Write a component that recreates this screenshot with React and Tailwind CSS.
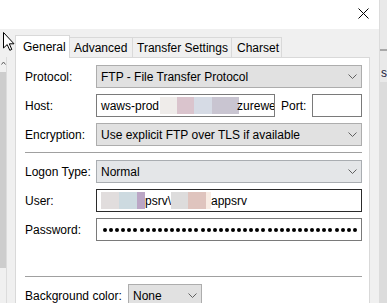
import React from "react";

const font = { fontFamily: '"Liberation Sans", Arial, sans-serif' };

function Chevron() {
     return (
          <svg width="9" height="6" viewBox="0 0 9 6" className="shrink-0">
               <polyline points="0.5,0.5 4.5,4.5 8.5,0.5" fill="none" stroke="#606060" strokeWidth="1" />
          </svg>
     );
}

function Select({ value, className = "" }) {
     return (
          <div className={`h-[23px] shrink-0 flex items-center justify-between border pl-[4px] pr-[4px] ${className}`}>
               <span className="whitespace-nowrap">{value}</span>
               <Chevron />
          </div>
     );
}

function Row({ label, children, className = "" }) {
     return (
          <div className={`flex shrink-0 items-center ${className}`}>
               <div className="w-[71px] shrink-0 whitespace-nowrap">{label}</div>
               <div className="flex-1 min-w-0">{children}</div>
          </div>
     );
}

function Blur({ w, color }) {
     return <span className="inline-block h-[17px] shrink-0" style={{ width: w, background: color }} />;
}

export default function App() {
     const dots = Array.from({ length: 42 });

     return (
          <div className="w-[387px] h-[303px] relative overflow-hidden bg-[#f0f0f0] flex text-[12px] text-black" style={font}>

               {/* dialog */}
               <div className="w-[379px] shrink-0 flex flex-col">

                    <div className="h-[29px] shrink-0 bg-white flex justify-end items-start pr-[10px] pt-[8px]">
                         <svg width="11" height="11" viewBox="0 0 11 11">
                              <line x1="0.5" y1="0.5" x2="10.5" y2="10.5" stroke="#000" strokeWidth="1" />
                              <line x1="10.5" y1="0.5" x2="0.5" y2="10.5" stroke="#000" strokeWidth="1" />
                         </svg>
                    </div>

                    <div className="flex-1 min-h-0 flex">

                         {/* tree scrollbar */}
                         <div className="w-[8px] shrink-0 pt-[28px] flex flex-col">
                              <div className="h-[15px] shrink-0 w-[7px] bg-[#f0f0f0] border-r border-[#dcdcdc] flex justify-center pt-[4px]">
                                   <svg width="5" height="4" viewBox="0 0 5 4">
                                        <polyline points="0.5,3.5 2.5,1 4.5,3.5" fill="none" stroke="#606060" strokeWidth="1" />
                                   </svg>
                              </div>
                              <div className="h-[196px] shrink-0 w-[7px] flex border-r border-[#dcdcdc]">
                                   <div className="w-[6px] bg-[#cdcdcd]" />
                              </div>
                              <div className="flex-1 w-[7px] border-r border-[#dcdcdc]" />
                         </div>

                         {/* tab control */}
                         <div className="ml-[7px] w-[355px] shrink-0 flex flex-col">

                              <div className="h-[28px] shrink-0 flex items-end">
                                   <div className="relative z-10 w-[55px] h-[23px] -mb-px bg-white border border-b-0 border-[#d9d9d9] flex items-center pl-[7px]">
                                        General
                                   </div>
                                   <div className="w-[63px] h-[20px] bg-[#f0f0f0] border border-l-0 border-b-0 border-[#d9d9d9] flex items-center pl-[4px]">
                                        Advanced
                                   </div>
                                   <div className="w-[99px] h-[20px] bg-[#f0f0f0] border border-l-0 border-b-0 border-[#d9d9d9] flex items-center pl-[4px]">
                                        Transfer Settings
                                   </div>
                                   <div className="w-[50px] h-[20px] bg-[#f0f0f0] border border-l-0 border-b-0 border-[#d9d9d9] flex items-center pl-[5px]">
                                        Charset
                                   </div>
                              </div>

                              <div className="flex-1 bg-white border border-[#d9d9d9] pl-[9px] pr-[7px] pt-[7px] flex flex-col">

                                   <Row label="Protocol:">
                                        <Select value="FTP - File Transfer Protocol" className="bg-[#e1e1e1] border-[#adadad]" />
                                   </Row>

                                   <Row label="Host:" className="mt-[6px]">
                                        <div className="flex items-center">
                                             <div className="w-[179px] h-[23px] border border-[#7a7a7a] flex items-center pl-[4px] overflow-hidden whitespace-nowrap">
                                                  <span>waws-prod</span>
                                                  <span className="ml-[1px] flex">
                                                       <Blur w={17} color="#efecea" />
                                                       <Blur w={17} color="#dac4cd" />
                                                       <Blur w={18} color="#d6dbe5" />
                                                       <Blur w={27} color="#c9c5d1" />
                                                  </span>
                                                  <span className="-ml-[2px]">zurewe</span>
                                             </div>
                                             <span className="ml-[6px]">Port:</span>
                                             <div className="ml-auto w-[50px] h-[23px] border border-[#7a7a7a]" />
                                        </div>
                                   </Row>

                                   <Row label="Encryption:" className="mt-[6px]">
                                        <Select value="Use explicit FTP over TLS if available" className="bg-[#e1e1e1] border-[#adadad]" />
                                   </Row>

                                   <div className="mt-[6px] h-px shrink-0 bg-[#a0a0a0]" />

                                   <Row label="Logon Type:" className="mt-[7px]">
                                        <Select value="Normal" className="bg-[#e4e6e8] border-[#a9adb1]" />
                                   </Row>

                                   <Row label="User:" className="mt-[6px]">
                                        <div className="h-[23px] border border-[#2b2b2b] flex items-center pl-[4px] whitespace-nowrap overflow-hidden">
                                             <Blur w={18} color="#e1dddd" />
                                             <Blur w={18} color="#cddae0" />
                                             <Blur w={8} color="#bba6c5" />
                                             <span>psrv\</span>
                                             <Blur w={17} color="#dddcdc" />
                                             <Blur w={18} color="#dfc4be" />
                                             <Blur w={5} color="#f8ece4" />
                                             <span>appsrv</span>
                                        </div>
                                   </Row>

                                   <Row label="Password:" className="mt-[6px]">
                                        <div className="h-[23px] border border-[#7a7a7a] flex items-center pl-[6px] gap-[2.1px] overflow-hidden">
                                             {dots.map((_, i) => (
                                                  <span key={i} className="w-[4px] h-[4px] shrink-0 rounded-full bg-black" />
                                             ))}
                                        </div>
                                   </Row>

                                   <div className="mt-[35px] h-px shrink-0 bg-[#a0a0a0]" />

                                   <div className="mt-[7px] shrink-0 flex items-center">
                                        <span className="w-[103px] shrink-0 whitespace-nowrap">Background color:</span>
                                        <Select value="None" className="w-[74px] bg-[#e1e1e1] border-[#adadad]" />
                                   </div>

                              </div>
                         </div>
                    </div>
               </div>

               {/* window behind */}
               <div className="w-[8px] shrink-0 flex flex-col bg-[#e9e9e9] border-l border-[#dcdcdc] overflow-hidden">
                    <div className="h-[49px] shrink-0" />
                    <div className="h-[2px] shrink-0 bg-[#a8a8a8]" />
                    <div className="pt-[13px] pl-[1px] whitespace-nowrap text-[#1a1a3a]">si</div>
                    <div className="flex-1 bg-[#dcdcdc]" />
               </div>

               {/* mouse pointer */}
               <svg className="absolute left-[3px] top-[32px]" width="12" height="19" viewBox="0 0 12 19">
                    <path d="M0.5,0.5 L0.5,16 L4.2,12.6 L6.8,18.3 L8.8,17.4 L6.3,11.8 L11,11.8 Z" fill="#fff" stroke="#000" strokeWidth="1" strokeLinejoin="miter" />
               </svg>

          </div>
     );
}
